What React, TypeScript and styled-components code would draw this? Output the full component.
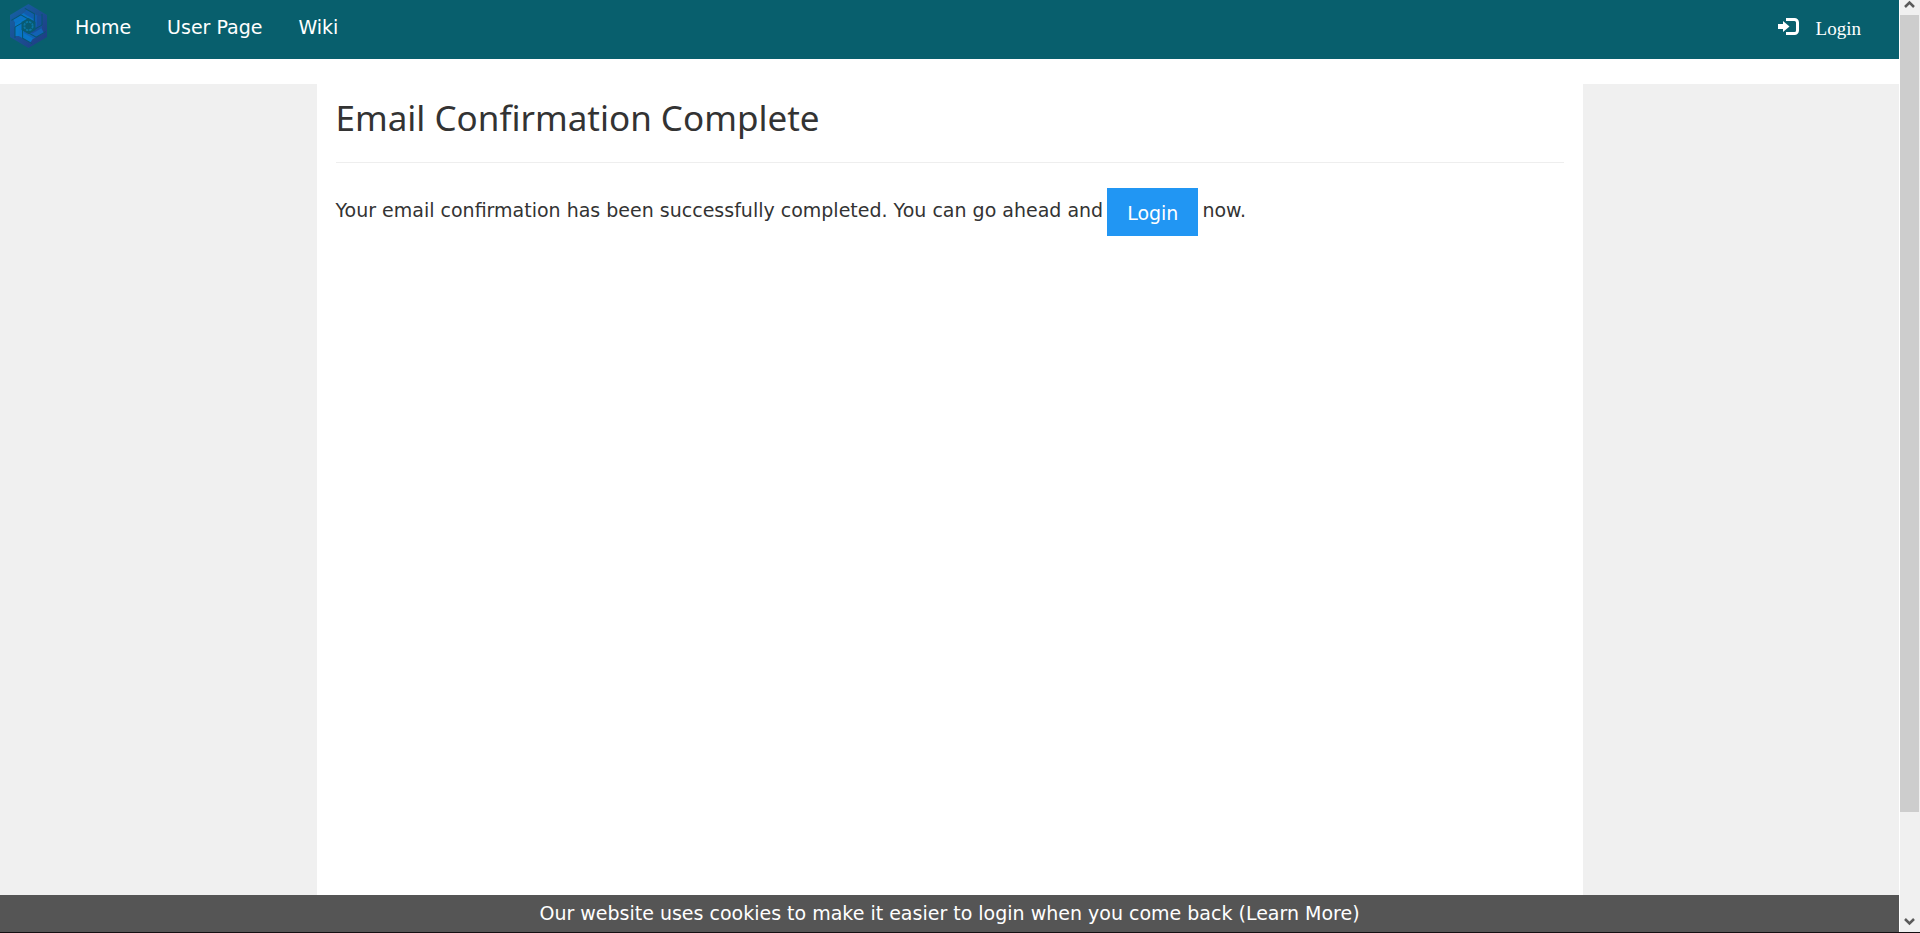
import React from "react";
import styled, { createGlobalStyle } from "styled-components";

const GlobalStyle = createGlobalStyle`
  *, *::before, *::after { box-sizing: border-box; }
  body {
    margin: 0;
    background: #fff;
    color: #333;
    font-family: "DejaVu Sans", Verdana, sans-serif;
    font-size: 19px;
    line-height: 27px;
  }
`;

const Window = styled.div`
  display: flex;
  height: 100vh;
  border-bottom: 1px solid #140f12;
`;

const Page = styled.div`
  flex: 1;
  min-width: 0;
  display: flex;
  flex-direction: column;
`;

const TopBar = styled.header`
  display: flex;
  justify-content: space-between;
  height: 59px;
  margin-bottom: 25px;
  background: #085f6d;
`;

const Nav = styled.nav`
  display: flex;
  align-items: flex-start;
`;

const LogoLink = styled.a`
  display: block;
  padding: 4px 10px;

  svg {
    display: block;
  }
`;

const NavLink = styled.a`
  padding: 14px 18px;
  color: #fff;
  text-decoration: none;
`;

const LoginLink = styled.a`
  display: flex;
  gap: 17px;
  padding: 15px 38px 0 0;
  color: #fff;
  font-family: "Liberation Serif", "Times New Roman", serif;
  text-decoration: none;

  svg {
    margin-top: 3px;
  }
`;

const Columns = styled.div`
  flex: 1;
  min-height: 0;
  display: grid;
  grid-template-columns: 1fr 4fr 1fr;
`;

const SideColumn = styled.aside`
  background: #f0f0f0;
`;

const Content = styled.main`
  padding: 8px 19px;
`;

const Title = styled.h1`
  margin: 0;
  font-family: "Noto Sans", "Segoe UI", sans-serif;
  font-size: 35px;
  font-weight: 400;
  line-height: 52px;
`;

const Rule = styled.hr`
  margin: 18px 0 25px;
  border: 0;
  border-top: 1px solid #eee;
`;

const Message = styled.p`
  display: flex;
  flex-wrap: wrap;
  gap: 4px;
  margin: 0;
  line-height: 44px;
`;

const LoginButton = styled.button`
  height: 48px;
  padding: 2px 20px 0;
  border: 0;
  background: #2196f3;
  color: #fff;
  font: inherit;
  line-height: 27px;
  cursor: pointer;
`;

const CookieBar = styled.footer`
  padding: 5px 16px;
  background: #555;
  color: #fff;
  text-align: center;
`;

const CookieLink = styled.a`
  color: inherit;
  text-decoration: none;
`;

const ScrollTrack = styled.div`
  display: flex;
  flex-direction: column;
  align-items: center;
  width: 21px;
  padding-right: 1px;
  border-left: 1px solid #fff;
  background: #f0f0f0;

  svg {
    flex: none;
  }
`;

const ScrollThumb = styled.div`
  align-self: stretch;
  flex: 797;
  background: #cdcdcd;
`;

const ScrollRest = styled.div`
  flex: 100;
`;

const BLADES = [0, 60, 120, 180, 240, 300];
const BLADE_FILLS = ["#0878c8", "#0b72c4", "#125cae", "#174f9c", "#1262b4", "#0974c6"];

function Logo() {
  return (
    <svg width="37" height="44" viewBox="-18.5 -22 37 44" aria-hidden="true">
      <defs>
        <linearGradient id="rim" x1="0" y1="0" x2="1" y2="1">
          <stop offset="0" stopColor="#1463a6" />
          <stop offset="1" stopColor="#213a80" />
        </linearGradient>
      </defs>
      <polygon points="0,-22 18.5,-11 18.5,11 0,22 -18.5,11 -18.5,-11" fill="url(#rim)" />
      {BLADES.map((angle, i) => (
        <g key={angle} transform={`rotate(${angle})`} fill="none">
          <path d="M-11 10 L-11 -2 L-1 -7.800" stroke={BLADE_FILLS[i]} strokeWidth="5" />
        </g>
      ))}
      {BLADES.map((angle) => (
        <g key={angle} transform={`rotate(${angle})`} fill="none">
          <path d="M-13.500 12 L-13.500 1 L-2 -5.700" stroke="#07556f" strokeWidth="1" />
        </g>
      ))}
      <polygon points="0,-8 7,-4 7,4 0,8 -7,4 -7,-4" fill="#085a72" />
      <circle r="4.200" fill="none" stroke="#0b76a4" strokeWidth="1.800" strokeDasharray="2.400 .9" />
    </svg>
  );
}

function LoginIcon() {
  return (
    <svg width="21" height="17" viewBox="0 0 21 17" aria-hidden="true">
      <path d="M0 6h5V3l6.500 5.500L5 14v-3H0z" fill="#fff" />
      <path
        d="M8 1.500h8.500a3 3 0 0 1 3 3v8a3 3 0 0 1-3 3H8"
        fill="none"
        stroke="#fff"
        strokeWidth="3"
      />
    </svg>
  );
}

function ScrollArrow({ down = false }: { down?: boolean }) {
  return (
    <svg width="11" height={down ? 20 : 15} viewBox={down ? "0 -4 11 20" : "0 0 11 15"} aria-hidden="true">
      <path
        d={down ? "M1 3l4.500 4.500L10 3" : "M1 7l4.500-4.500L10 7"}
        fill="none"
        stroke="#5a5a5a"
        strokeWidth="2.500"
      />
    </svg>
  );
}

export default function App() {
  return (
    <>
      <GlobalStyle />
      <Window>
        <Page>
          <TopBar>
            <Nav>
              <LogoLink href="#" aria-label="Main page">
                <Logo />
              </LogoLink>
              <NavLink href="#home">Home</NavLink>
              <NavLink href="#user">User Page</NavLink>
              <NavLink href="#wiki">Wiki</NavLink>
            </Nav>
            <LoginLink href="#login">
              <LoginIcon />
              Login
            </LoginLink>
          </TopBar>
          <Columns>
            <SideColumn />
            <Content>
              <Title>Email Confirmation Complete</Title>
              <Rule />
              <Message>
                <span>Your email confirmation has been successfully completed. You can go ahead and</span>
                <LoginButton type="button">Login</LoginButton>
                <span>now.</span>
              </Message>
            </Content>
            <SideColumn />
          </Columns>
          <CookieBar>
            Our website uses cookies to make it easier to login when you come back{" "}
            <CookieLink href="#cookies">(Learn More)</CookieLink>
          </CookieBar>
        </Page>
        <ScrollTrack aria-hidden="true">
          <ScrollArrow />
          <ScrollThumb />
          <ScrollRest />
          <ScrollArrow down />
        </ScrollTrack>
      </Window>
    </>
  );
}
